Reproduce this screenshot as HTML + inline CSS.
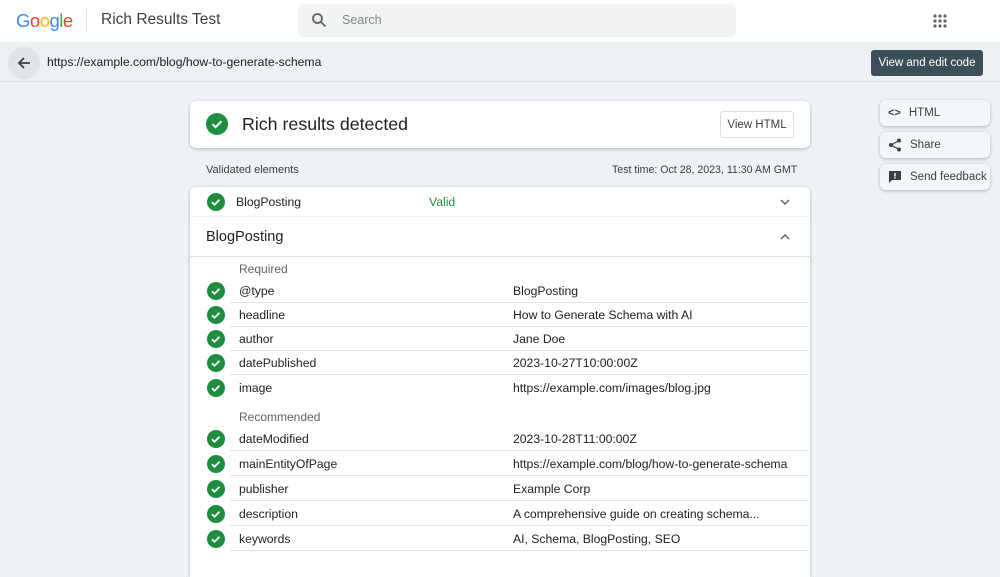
<!DOCTYPE html>
<html><head><meta charset="utf-8"><style>
*{margin:0;padding:0;box-sizing:border-box}
body{width:1000px;height:558px;overflow:hidden;background:#eef1f6;font-family:"Liberation Sans",Arial,sans-serif;color:#202124;position:relative}
.abs{position:absolute;white-space:nowrap}
.top{left:0;top:0;width:1000px;height:42px;background:#fff}
.urlbar{left:0;top:42px;width:1000px;height:40px;background:#edf0f5;border-bottom:1px solid #dde1e7}
.card{background:#fff;border-radius:6px;box-shadow:0 1px 3px rgba(0,0,0,.25)}
.chk{width:18px;height:18px;border-radius:50%;background:#1e8e3e;display:flex;align-items:center;justify-content:center}
.row{position:absolute;left:0;width:620px;height:24px;font-size:12.2px;white-space:nowrap}
.row .k{position:absolute;left:49px;top:5px}
.row .v{position:absolute;left:323px;top:5px}
.row .chk{position:absolute;left:17px;top:3px}
.row .ln{position:absolute;left:40px;right:2px;bottom:0;border-bottom:1px solid #e3e3e3}
.side{left:880px;width:110px;height:26px;font-size:11.5px;color:#3c4043;display:flex;align-items:center;padding-left:8px;gap:8px;background:#f5f6f8}
</style></head><body>
<div class="abs top"></div>
<div class="abs" style="left:16px;top:10px;font-size:18.5px;letter-spacing:-0.5px"><span style="color:#4285f4">G</span><span style="color:#ea4335">o</span><span style="color:#fbbc05">o</span><span style="color:#4285f4">g</span><span style="color:#34a853">l</span><span style="color:#ea4335">e</span></div>
<div class="abs" style="left:86px;top:9px;width:1px;height:24px;background:#e0e0e0"></div>
<div class="abs" style="left:101px;top:11px;font-size:15.5px;color:#3c4043">Rich Results Test</div>
<div class="abs" style="left:298px;top:4px;width:438px;height:33px;background:#f1f3f4;border-radius:6px"></div>
<svg class="abs" style="left:311px;top:12px" width="16" height="16" viewBox="0 0 16 16"><circle cx="6.5" cy="6.5" r="4.5" fill="none" stroke="#5f6368" stroke-width="1.8"/><path d="M10 10l4.5 4.5" stroke="#5f6368" stroke-width="1.8"/></svg>
<div class="abs" style="left:342px;top:13px;font-size:12.5px;color:#80868b">Search</div>
<svg class="abs" style="left:933px;top:14px" width="14" height="14" viewBox="0 0 14 14" fill="#5f6368"><circle cx="2" cy="2" r="1.6"/><circle cx="7" cy="2" r="1.6"/><circle cx="12" cy="2" r="1.6"/><circle cx="2" cy="7" r="1.6"/><circle cx="7" cy="7" r="1.6"/><circle cx="12" cy="7" r="1.6"/><circle cx="2" cy="12" r="1.6"/><circle cx="7" cy="12" r="1.6"/><circle cx="12" cy="12" r="1.6"/></svg>
<div class="abs urlbar"></div>
<div class="abs" style="left:8px;top:47px;width:32px;height:32px;border-radius:50%;background:#e1e4e9"></div>
<svg class="abs" style="left:16px;top:55px" width="16" height="16" viewBox="0 0 16 16"><path d="M14 8H3M8 3L3 8l5 5" fill="none" stroke="#3c4043" stroke-width="1.8"/></svg>
<div class="abs" style="left:47px;top:55px;font-size:12.2px">https://example.com/blog/how-to-generate-schema</div>
<div class="abs" style="left:871px;top:50px;width:112px;height:26px;background:#3c4f58;border-radius:3px;color:#fff;font-size:11.5px;display:flex;align-items:center;justify-content:center">View and edit code</div>

<div class="abs side card" style="top:100px"><span style="font-size:11px;font-weight:bold">&lt;&gt;</span>HTML</div>
<div class="abs side card" style="top:132px"><svg width="14" height="14" viewBox="0 0 14 14"><circle cx="11" cy="2.5" r="2" fill="#3c4043"/><circle cx="3" cy="7" r="2" fill="#3c4043"/><circle cx="11" cy="11.5" r="2" fill="#3c4043"/><path d="M11 2.5L3 7l8 4.5" stroke="#3c4043" fill="none" stroke-width="1.2"/></svg>Share</div>
<div class="abs side card" style="top:164px"><svg width="14" height="14" viewBox="0 0 14 14"><path d="M1 1h12v9H4l-3 3z" fill="#3c4043"/><rect x="6.3" y="3" width="1.4" height="3.5" fill="#fff"/><rect x="6.3" y="7.2" width="1.4" height="1.4" fill="#fff"/></svg>Send feedback</div>

<div class="abs card" style="left:190px;top:101px;width:620px;height:47px"></div>
<div class="abs chk" style="left:206px;top:113px;width:22px;height:22px"><svg width="14" height="14" viewBox="0 0 14 14"><path d="M2.5 7.2l3 3 6-6" fill="none" stroke="#fff" stroke-width="2"/></svg></div>
<div class="abs" style="left:242px;top:114px;font-size:17.8px">Rich results detected</div>
<div class="abs" style="left:720px;top:111px;width:74px;height:27px;border:1px solid #dadce0;border-radius:3px;font-size:11.5px;color:#3c4043;display:flex;align-items:center;justify-content:center">View HTML</div>
<div class="abs" style="left:206px;top:164px;font-size:11px;color:#3c4043">Validated elements</div>
<div class="abs" style="left:612px;top:164px;font-size:10.6px;color:#3c4043">Test time: Oct 28, 2023, 11:30 AM GMT</div>

<div class="abs card" style="left:190px;top:187px;width:620px;height:30px;border-radius:6px 6px 0 0"></div>
<div class="abs chk" style="left:207px;top:193px"><svg width="12" height="12" viewBox="0 0 12 12"><path d="M2 6.2l2.5 2.5 5-5" fill="none" stroke="#fff" stroke-width="1.8"/></svg></div>
<div class="abs" style="left:236px;top:195px;font-size:12.2px">BlogPosting</div>
<div class="abs" style="left:429px;top:195px;font-size:12.2px;color:#1e8e3e">Valid</div>
<svg class="abs" style="left:779px;top:197px" width="12" height="10" viewBox="0 0 12 10"><path d="M2 3l4 4 4-4" fill="none" stroke="#5f6368" stroke-width="1.5"/></svg>

<div class="abs card" style="left:190px;top:217px;width:620px;height:360px;border-radius:0">
<div style="position:absolute;left:16px;top:12px;font-size:14.5px">BlogPosting</div>
<svg style="position:absolute;left:589px;top:15px" width="12" height="10" viewBox="0 0 12 10"><path d="M2 7l4-4 4 4" fill="none" stroke="#5f6368" stroke-width="1.5"/></svg>
<div style="position:absolute;left:0;right:0;top:39px;border-bottom:1px solid #e3e3e3"></div>
<div style="position:absolute;left:49px;top:45px;font-size:12px;color:#5f6368">Required</div>
<div class="row" style="top:62px"><div class="chk"><svg width="12" height="12" viewBox="0 0 12 12"><path d="M2 6.2l2.5 2.5 5-5" fill="none" stroke="#fff" stroke-width="1.8"/></svg></div><span class="k">@type</span><span class="v">BlogPosting</span><div class="ln"></div></div>
<div class="row" style="top:86px"><div class="chk"><svg width="12" height="12" viewBox="0 0 12 12"><path d="M2 6.2l2.5 2.5 5-5" fill="none" stroke="#fff" stroke-width="1.8"/></svg></div><span class="k">headline</span><span class="v">How to Generate Schema with AI</span><div class="ln"></div></div>
<div class="row" style="top:110px"><div class="chk"><svg width="12" height="12" viewBox="0 0 12 12"><path d="M2 6.2l2.5 2.5 5-5" fill="none" stroke="#fff" stroke-width="1.8"/></svg></div><span class="k">author</span><span class="v">Jane Doe</span><div class="ln"></div></div>
<div class="row" style="top:134px"><div class="chk"><svg width="12" height="12" viewBox="0 0 12 12"><path d="M2 6.2l2.5 2.5 5-5" fill="none" stroke="#fff" stroke-width="1.8"/></svg></div><span class="k">datePublished</span><span class="v">2023-10-27T10:00:00Z</span><div class="ln"></div></div>
<div class="row" style="top:159px"><div class="chk"><svg width="12" height="12" viewBox="0 0 12 12"><path d="M2 6.2l2.5 2.5 5-5" fill="none" stroke="#fff" stroke-width="1.8"/></svg></div><span class="k">image</span><span class="v">https://example.com/images/blog.jpg</span></div>
<div style="position:absolute;left:49px;top:193px;font-size:12px;color:#5f6368">Recommended</div>
<div class="row" style="top:210px"><div class="chk"><svg width="12" height="12" viewBox="0 0 12 12"><path d="M2 6.2l2.5 2.5 5-5" fill="none" stroke="#fff" stroke-width="1.8"/></svg></div><span class="k">dateModified</span><span class="v">2023-10-28T11:00:00Z</span><div class="ln"></div></div>
<div class="row" style="top:235px"><div class="chk"><svg width="12" height="12" viewBox="0 0 12 12"><path d="M2 6.2l2.5 2.5 5-5" fill="none" stroke="#fff" stroke-width="1.8"/></svg></div><span class="k">mainEntityOfPage</span><span class="v">https://example.com/blog/how-to-generate-schema</span><div class="ln"></div></div>
<div class="row" style="top:260px"><div class="chk"><svg width="12" height="12" viewBox="0 0 12 12"><path d="M2 6.2l2.5 2.5 5-5" fill="none" stroke="#fff" stroke-width="1.8"/></svg></div><span class="k">publisher</span><span class="v">Example Corp</span><div class="ln"></div></div>
<div class="row" style="top:285px"><div class="chk"><svg width="12" height="12" viewBox="0 0 12 12"><path d="M2 6.2l2.5 2.5 5-5" fill="none" stroke="#fff" stroke-width="1.8"/></svg></div><span class="k">description</span><span class="v">A comprehensive guide on creating schema...</span><div class="ln"></div></div>
<div class="row" style="top:310px"><div class="chk"><svg width="12" height="12" viewBox="0 0 12 12"><path d="M2 6.2l2.5 2.5 5-5" fill="none" stroke="#fff" stroke-width="1.8"/></svg></div><span class="k">keywords</span><span class="v">AI, Schema, BlogPosting, SEO</span><div class="ln"></div></div>
</div>
</body></html>
